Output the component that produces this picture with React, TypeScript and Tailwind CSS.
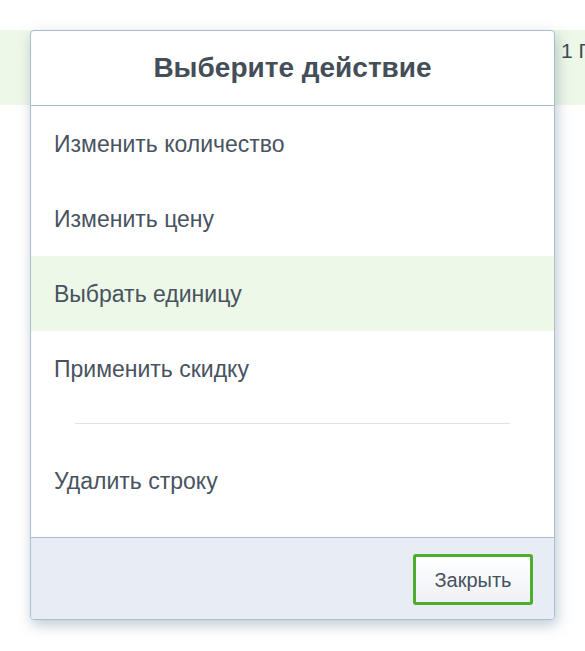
import React from "react";

const items = ["Изменить количество", "Изменить цену", "Выбрать единицу", "Применить скидку"];

const App = () => {
  return (
    <div
      className="relative w-full h-[651px] bg-white overflow-hidden"
      style={{ fontFamily: '"Liberation Sans", Arial, sans-serif' }}
    >
      {/* Page row behind the dialog */}
      <div className="mt-[30px] h-[75px] bg-[#eef8e8] pl-[561px] pt-[5px] whitespace-nowrap text-[21px] text-[#3f4a56]">
        1 П
      </div>

      {/* Dialog */}
      <div className="absolute left-[30px] top-[30px] w-[525px] bg-white border border-[#a8bed2] rounded-[4px] shadow-[2px_5px_14px_rgba(70,100,130,0.35)] overflow-hidden">
        <div className="h-[75px] border-b border-[#a8bed2] flex items-center justify-center">
          <h2 className="text-[28px] font-bold text-[#444e59]">Выберите действие</h2>
        </div>

        <div className="pb-[18px]">
          {items.map((item, i) => (
            <div
              key={item}
              className={`h-[75px] flex items-center pl-[23px] pt-[2px] text-[23px] text-[#48535f] ${
                i === 2 ? "bg-[#edf8e8]" : ""
              }`}
            >
              {item}
            </div>
          ))}
          <div className="mx-[44px] mt-[17px] mb-[20px] border-t border-[#dfe3e8]" />
          <div className="h-[75px] flex items-center pl-[23px] text-[23px] text-[#48535f]">
            Удалить строку
          </div>
        </div>

        <div className="h-[82px] bg-[#e8edf5] border-t border-[#a8bed2] flex items-start justify-end pt-[16px] pr-[21px]">
          <button className="w-[120px] h-[51px] border-[3px] border-[#4cae2a] rounded-[3px] bg-gradient-to-b from-white to-[#eef1f5] text-[20px] text-[#47525e]">
            Закрыть
          </button>
        </div>
      </div>
    </div>
  );
};

export default App;
